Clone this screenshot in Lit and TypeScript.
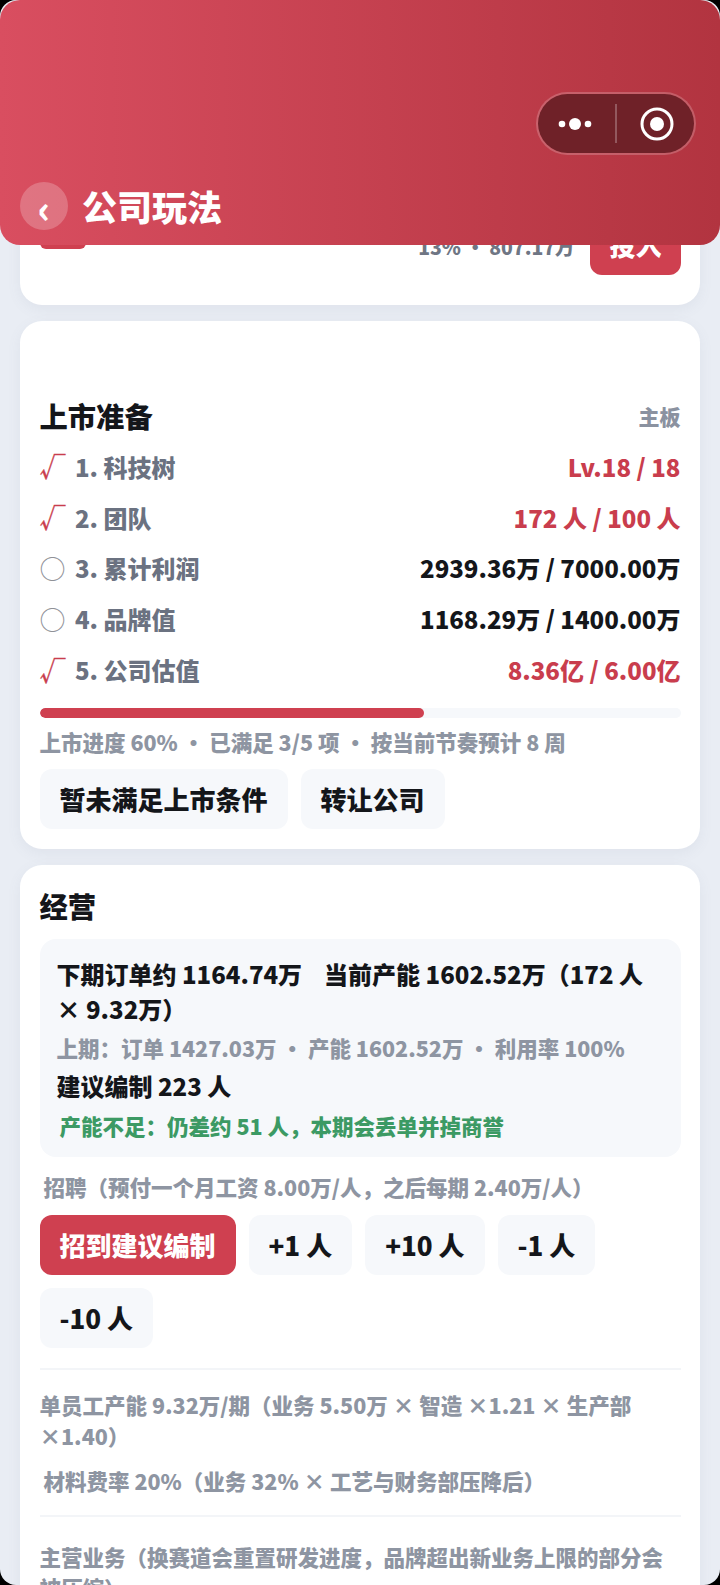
import { LitElement, html, css } from "lit";
import { customElement } from "lit/decorators.js";

@customElement("app-root")
export class AppRoot extends LitElement {
  static styles = css`
    :host {
      display: block;
      width: 720px;
      height: 1585px;
      overflow: hidden;
      position: relative;
      background: #e9edf4;
      font-family: "Noto Sans CJK SC", "Noto Sans", sans-serif;
      font-weight: 900;
      color: #14161a;
    }
    * { box-sizing: border-box; }
    .scroll { display: flex; flex-direction: column; gap: 16px; padding: 0 20px; }
    .card {
      background: #fff;
      border-radius: 22px;
      box-shadow: 0 4px 14px rgba(100, 115, 145, 0.08);
      padding: 0 19.5px;
    }
    .tail { height: 305px; display: flex; align-items: flex-end; justify-content: space-between; padding-bottom: 30px; }
    .stub { width: 46px; height: 50px; background: #cf4050; border-radius: 6px; align-self: flex-end; margin-bottom: 26px; }
    .tail-right { display: flex; align-items: center; gap: 16px; }
    .tail-meta { font-size: 19.4px; line-height: 32px; padding-top: 4px; color: #6f7684; }
    .tail-right .btn { padding: 0 19px; }
    .btn {
      height: 60px;
      padding: 0 20px;
      border-radius: 12px;
      background: #f6f8fb;
      font-size: 26px;
      line-height: 60px;
      white-space: nowrap;
      color: #14161a;
    }
    .btn.red { background: #cf4050; color: #fff; }
    .prep { padding-top: 71px; padding-bottom: 20px; }
    .title-row { display: flex; justify-content: space-between; align-items: center; height: 48px; }
    .h { font-size: 28.3px; line-height: 48px; }
    .tag { font-size: 21px; color: #8b92a0; }
    .rows { display: flex; flex-direction: column; margin-top: 1px; }
    .row { display: flex; justify-content: space-between; align-items: center; height: 50.8px; font-size: 24px; }
    .label { display: flex; align-items: center; color: #6b7281; }
    .mark { width: 35.5px; font-weight: 400; font-size: 26px; color: #c93d4d; line-height: 36px; -webkit-text-stroke: 0.3px #c93d4d; }
    .mark.no { color: #8f9197; -webkit-text-stroke: 0; }
    .val.ok { color: #c93d4d; }
    .bar { height: 10px; border-radius: 5px; background: #f6f8fb; margin-top: 13px; overflow: hidden; }
    .fill { height: 100%; border-radius: 5px; background: #cf4050; }
    .sub { font-size: 21.5px; line-height: 31px; color: #8e95a2; }
    .prep .sub { margin-top: 8px; }
    .btns { display: flex; flex-wrap: wrap; gap: 13px; }
    .prep .btns { margin-top: 12px; }
    .ops { padding-top: 17px; padding-bottom: 40px; }
    .box { margin-top: 9px; background: #f6f8fb; border-radius: 16px; padding: 17px 17px 15px; }
    .strong { font-size: 24px; line-height: 35px; }
    .box .sub { margin-top: 6px; }
    .box .strong.s2 { margin-top: 5px; }
    .green { font-size: 21.5px; line-height: 32px; color: #3c9a64; margin: 7px 3px 0; }
    .hire { margin: 14px 4px 0; }
    .ops .btns { margin-top: 13px; }
    .sep { height: 2px; background: #f3f5f8; }
    .first-sep { margin-top: 20px; margin-bottom: 19px; }
    .ind { margin: 14px 4px 0; }
    .second-sep { margin-top: 19px; margin-bottom: 24px; }
    .header {
      position: absolute;
      left: 0; top: 0;
      width: 720px; height: 245px;
      border-radius: 20px;
      background: linear-gradient(90deg, #d94e60, #b23440);
    }
    .nav { position: absolute; left: 20px; top: 180px; display: flex; align-items: center; gap: 14px; }
    .back {
      width: 48px; height: 48px; border-radius: 50%;
      background: rgba(255, 255, 255, 0.22);
      color: #fff;
      display: flex; align-items: center; justify-content: center;
      font-size: 38px; line-height: 48px;
      padding-top: 2px;
    }
    .page-title { font-size: 35px; line-height: 52px; color: #fff; }
    .pill {
      position: absolute; left: 536px; top: 92px;
      width: 160px; height: 63px;
      border-radius: 32px;
      background: #6f2128;
      background-clip: padding-box;
      border: 2px solid rgba(255, 255, 255, 0.2);
      display: block;
    }
    .pill svg { display: block; }
    .frame {
      position: absolute; inset: 0;
      border-radius: 16px;
      box-shadow: 0 0 0 30px #000;
      pointer-events: none;
    }
  `;

  private rows = [
    { ok: true, name: "1. 科技树", val: "Lv.18 / 18" },
    { ok: true, name: "2. 团队", val: "172 人 / 100 人" },
    { ok: false, name: "3. 累计利润", val: "2939.36万 / 7000.00万" },
    { ok: false, name: "4. 品牌值", val: "1168.29万 / 1400.00万" },
    { ok: true, name: "5. 公司估值", val: "8.36亿 / 6.00亿" },
  ];

  render() {
    return html`
      <div class="scroll">
        <section class="card tail">
          <div class="stub"></div>
          <div class="tail-right">
            <span class="tail-meta">13% • 807.17万</span>
            <div class="btn red">投入</div>
          </div>
        </section>
        <section class="card prep">
          <div class="title-row"><span class="h">上市准备</span><span class="tag">主板</span></div>
          <div class="rows">
            ${this.rows.map(
              (r) => html`<div class="row">
                <span class="label"><span class="mark ${r.ok ? "" : "no"}">${r.ok ? "√" : "○"}</span>${r.name}</span>
                <span class="val ${r.ok ? "ok" : ""}">${r.val}</span>
              </div>`
            )}
          </div>
          <div class="bar"><div class="fill" style="width: 60%"></div></div>
          <div class="sub">上市进度 60% • 已满足 3/5 项 • 按当前节奏预计 8 周</div>
          <div class="btns"><div class="btn">暂未满足上市条件</div><div class="btn">转让公司</div></div>
        </section>
        <section class="card ops">
          <div class="h">经营</div>
          <div class="box">
            <div class="strong">下期订单约 1164.74万 &nbsp;&nbsp; 当前产能 1602.52万（172 人 × 9.32万）</div>
            <div class="sub">上期：订单 1427.03万 • 产能 1602.52万 • 利用率 100%</div>
            <div class="strong s2">建议编制 223 人</div>
            <div class="green">产能不足：仍差约 51 人，本期会丢单并掉商誉</div>
          </div>
          <div class="sub hire">招聘（预付一个月工资 8.00万/人，之后每期 2.40万/人）</div>
          <div class="btns">
            <div class="btn red">招到建议编制</div>
            <div class="btn">+1 人</div>
            <div class="btn">+10 人</div>
            <div class="btn">-1 人</div>
            <div class="btn">-10 人</div>
          </div>
          <div class="sep first-sep"></div>
          <div class="sub">单员工产能 9.32万/期（业务 5.50万 × 智造 ×1.21 × 生产部 ×1.40）</div>
          <div class="sub ind">材料费率 20%（业务 32% × 工艺与财务部压降后）</div>
          <div class="sep second-sep"></div>
          <div class="sub">主营业务（换赛道会重置研发进度，品牌超出新业务上限的部分会被压缩）</div>
        </section>
      </div>
      <header class="header">
        <div class="pill">
          <svg width="156" height="59" viewBox="0 0 156 59">
            <circle cx="24" cy="30" r="3.3" fill="#fff"></circle>
            <circle cx="37" cy="30" r="6" fill="#fff"></circle>
            <circle cx="50" cy="30" r="3.3" fill="#fff"></circle>
            <rect x="77" y="10" width="2" height="39" fill="rgba(255,255,255,0.25)"></rect>
            <circle cx="119" cy="30" r="15" fill="none" stroke="#fff" stroke-width="3"></circle>
            <circle cx="119" cy="30" r="7" fill="#fff"></circle>
          </svg>
        </div>
        <div class="nav">
          <div class="back">‹</div>
          <div class="page-title">公司玩法</div>
        </div>
      </header>
      <div class="frame"></div>
    `;
  }
}
